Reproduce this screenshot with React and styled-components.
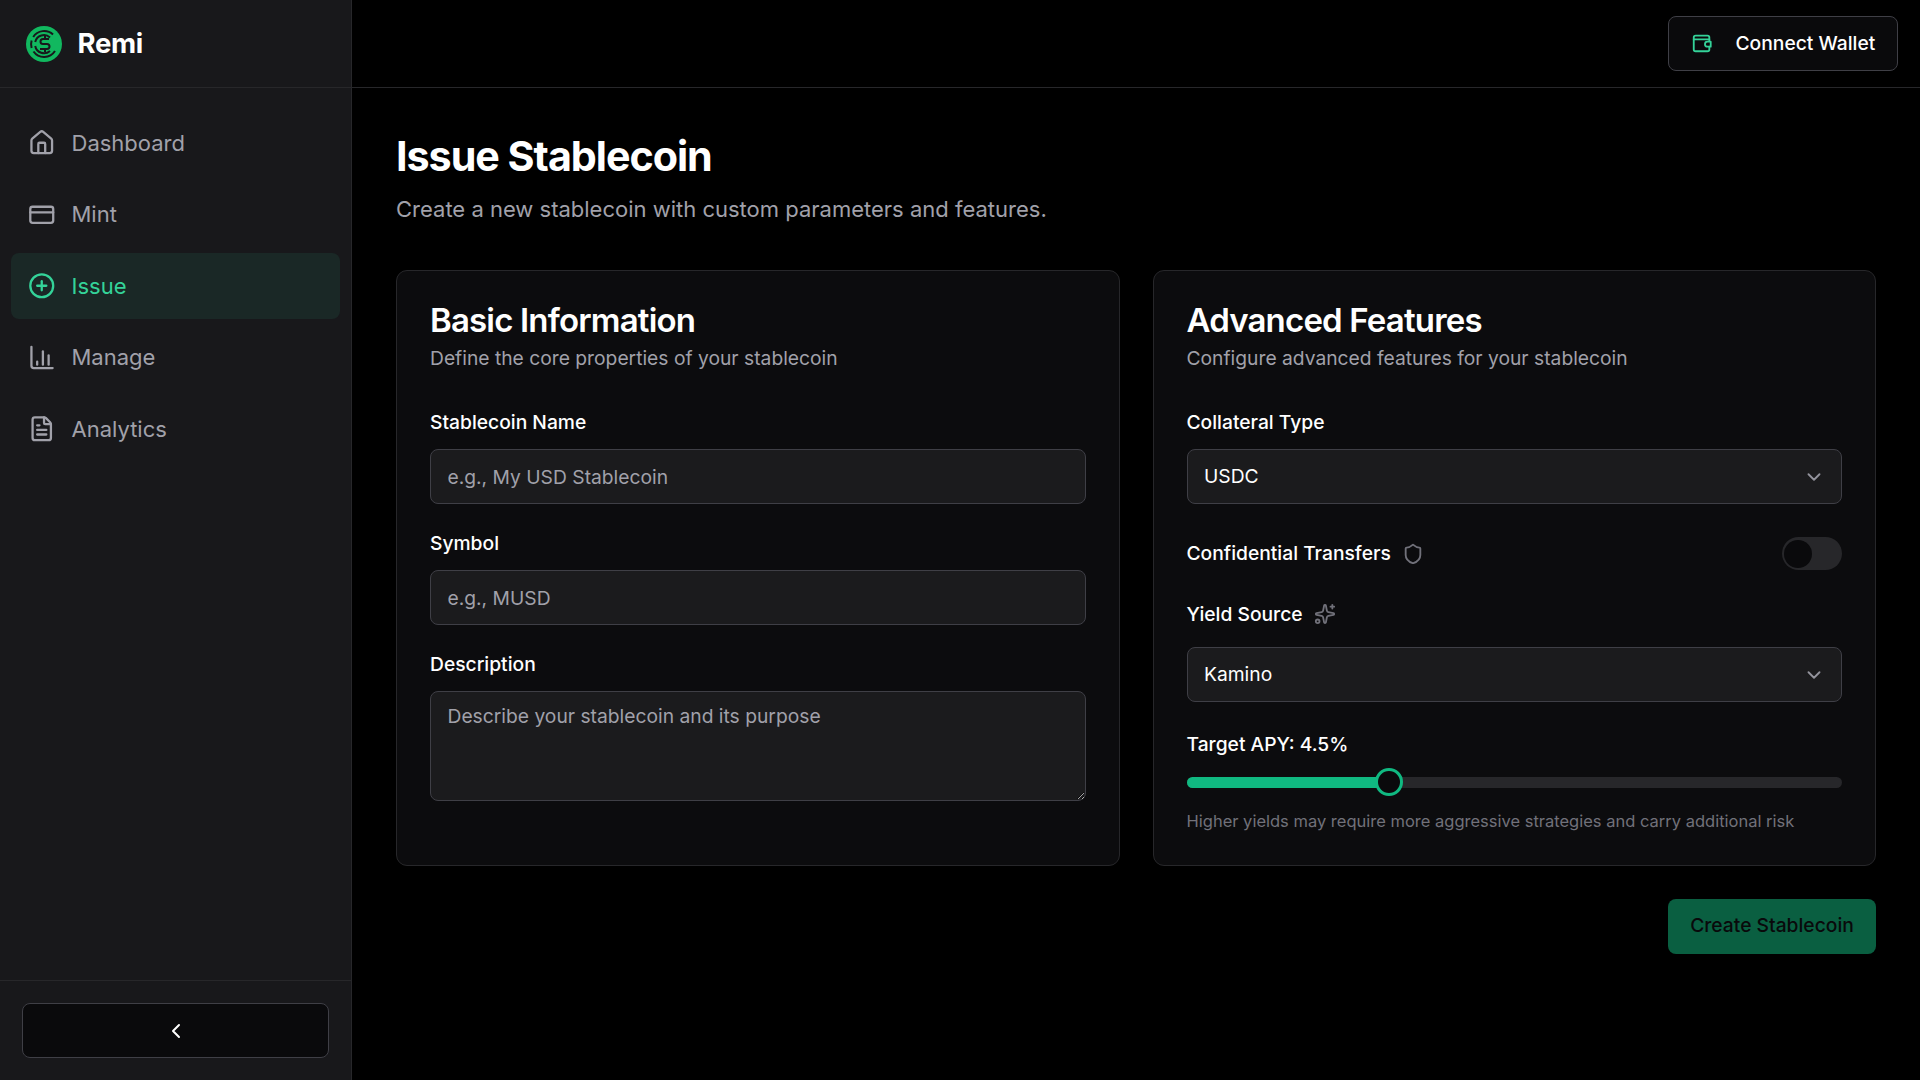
import React from 'react'
import styled, { createGlobalStyle } from 'styled-components'
import { House, CreditCard, CirclePlus, FileText, Shield, Sparkles, ChevronDown, ChevronLeft } from 'lucide-react'

const GlobalStyle = createGlobalStyle`
  * {
    box-sizing: border-box;
  }
  html, body {
    margin: 0;
    padding: 0;
    background: #000;
    color: #fff;
    font-family: Inter, "Liberation Sans", sans-serif;
  }
`

const Page = styled.div`
  display: flex;
  width: 100%;
  height: 100vh;
  overflow: hidden;
`

const Sidebar = styled.aside`
  display: flex;
  flex-direction: column;
  flex: 0 0 352px;
  height: 100%;
  background: #18181b;
  border-right: 1px solid #27272a;
`

const Brand = styled.div`
  display: flex;
  align-items: center;
  gap: 16px;
  height: 88px;
  padding: 0 26px;
  border-bottom: 1px solid #27272a;
`

const BrandName = styled.span`
  font-size: 27.5px;
  line-height: 33px;
  font-weight: 700;
  letter-spacing: -0.012em;
  margin: -1px 0 0 -0.5px;
`

const Nav = styled.nav`
  display: flex;
  flex-direction: column;
  flex: 1;
  gap: 5.5px;
  padding: 22px 11px 0;
`

const NavItem = styled.a`
  display: flex;
  align-items: center;
  gap: 16.5px;
  padding: 16.5px;
  border-radius: 8px;
  font-size: 22px;
  line-height: 33px;
  color: ${({ $active }) => ($active ? '#34d399' : '#a1a1aa')};
  background: ${({ $active }) => ($active ? '#1a2826' : 'transparent')};
  svg {
    flex: none;
    color: ${({ $active }) => ($active ? '#34d399' : '#a1a1aa')};
  }
`

const SidebarFooter = styled.div`
  height: 100px;
  padding: 22px 22px 0;
  border-top: 1px solid #27272a;
`

const CollapseButton = styled.button`
  display: flex;
  align-items: center;
  justify-content: center;
  width: 100%;
  height: 55px;
  padding: 0;
  color: #fff;
  background: #0a0a0c;
  border: 1px solid #3f3f46;
  border-radius: 8px;
`

const Main = styled.main`
  display: flex;
  flex-direction: column;
  flex: 1;
  min-width: 0;
`

const TopBar = styled.header`
  display: flex;
  align-items: center;
  justify-content: flex-end;
  height: 88px;
  padding: 0 22px 1px 0;
  border-bottom: 1px solid #27272a;
`

const WalletButton = styled.button`
  display: flex;
  align-items: center;
  gap: 22.5px;
  width: 230px;
  height: 55px;
  padding: 0 22px;
  font: 500 19.25px Inter, "Liberation Sans", sans-serif;
  color: #fff;
  background: #0a0a0c;
  border: 1px solid #3f3f46;
  border-radius: 8px;
  white-space: nowrap;
  svg {
    flex: none;
  }
`

const Content = styled.div`
  padding: 44px 44px 0;
`

const PageTitle = styled.h1`
  margin: 0;
  font-size: 41.25px;
  line-height: 48px;
  font-weight: 700;
  letter-spacing: -0.025em;
`

const PageSubtitle = styled.p`
  margin: 13px 0 0;
  font-size: 22px;
  line-height: 32px;
  color: #a1a1aa;
`

const Columns = styled.div`
  display: grid;
  grid-template-columns: 1fr 1fr;
  gap: 33px;
  margin-top: 45px;
`

const Card = styled.section`
  padding: 29px 33px 32px;
  background: #0c0c0e;
  border: 1px solid #27272a;
  border-radius: 11px;
`

const CardTitle = styled.h2`
  margin: 0;
  font-size: 33px;
  line-height: 40px;
  font-weight: 600;
  letter-spacing: -0.025em;
`

const CardSubtitle = styled.p`
  margin: 4px 0 36px;
  font-size: 19.25px;
  line-height: 28px;
  color: #a1a1aa;
`

const Label = styled.label`
  display: block;
  font-size: 19.25px;
  line-height: 28px;
  font-weight: 500;
  color: #fff;
`

const Field = styled.div`
  margin-bottom: 25px;
  ${Label} {
    margin-bottom: 13px;
  }
`

const fieldStyle = `
  display: block;
  width: 100%;
  padding: 0 16.5px;
  font: 400 19.25px Inter, "Liberation Sans", sans-serif;
  color: #fff;
  background: #1b1b1d;
  border: 1px solid #3f3f46;
  border-radius: 8px;
  outline: none;
  &::placeholder {
    color: #a1a1aa;
    opacity: 1;
  }
`

const TextInput = styled.input`
  ${fieldStyle}
  height: 55px;
`

const TextArea = styled.textarea`
  ${fieldStyle}
  height: 110px;
  padding-top: 10px;
  padding-bottom: 11px;
  line-height: 28px;
  resize: vertical;
`

const SelectBox = styled.div`
  display: flex;
  align-items: center;
  justify-content: space-between;
  height: 55px;
  padding: 0 16.5px 1px;
  font-size: 19.25px;
  background: #1b1b1d;
  border: 1px solid #3f3f46;
  border-radius: 8px;
  svg {
    color: #a1a1aa;
    opacity: 0.9;
    margin-bottom: -1px;
  }
`

const CollateralSelect = styled(SelectBox)`
  margin-top: 13px;
`

const ToggleRow = styled.div`
  display: flex;
  align-items: center;
  justify-content: space-between;
  height: 33px;
  margin-top: 33px;
`

const LabelGroup = styled.div`
  display: flex;
  align-items: center;
  gap: 11px;
  svg {
    color: #71717a;
  }
`

const ToggleLabel = styled(Label)`
  margin-top: -1px;
`

const Toggle = styled.div`
  display: flex;
  align-items: center;
  width: 60px;
  height: 33px;
  padding: 0 2px;
  background: #27272a;
  border-radius: 17px;
`

const ToggleKnob = styled.span`
  display: block;
  width: 28px;
  height: 28px;
  background: #0a0a0c;
  border-radius: 50%;
`

const YieldLabel = styled(LabelGroup)`
  margin: 30px 0 19px;
`

const ApyLabel = styled(Label)`
  margin: 28px 0 10px;
`

const Slider = styled.div`
  display: flex;
  align-items: center;
  height: 28px;
  position: relative;
`

const SliderTrack = styled.div`
  flex: 1;
  height: 11px;
  background: #27272a;
  border-radius: 6px;
  overflow: hidden;
`

const SliderFill = styled.div`
  height: 100%;
  background: #10b981;
`

const SliderThumb = styled.span`
  position: absolute;
  top: 0;
  width: 28px;
  height: 28px;
  margin-left: -14px;
  background: #0a0a0c;
  border: 3px solid #10b981;
  border-radius: 50%;
`

const Hint = styled.p`
  margin: 13px 0 0;
  font-size: 16.5px;
  line-height: 24px;
  color: #71717a;
`

const Actions = styled.div`
  display: flex;
  justify-content: flex-end;
  margin-top: 33px;
`

const CreateButton = styled.button`
  width: 208px;
  height: 55px;
  padding: 0 0 3px;
  font: 500 19.25px Inter, "Liberation Sans", sans-serif;
  color: #09090b;
  background: #0a5f41;
  border: 0;
  border-radius: 8px;
`

const Logo = () => (
  <svg width="36" height="36" viewBox="0 0 36 36" fill="none">
    <circle cx="18" cy="18" r="18" fill="#11b85f" />
    <g stroke="#18181b" strokeWidth="2" strokeLinecap="butt">
      <path d="M27 8.5A13 13 0 0 0 7.2 11" />
      <path d="M5.6 14.5A13 13 0 0 0 5.6 22" />
      <path d="M7.5 25.5A13 13 0 0 0 29 25" />
      <path d="M24 11.5A9 9 0 0 0 9.2 16" />
      <path d="M9.2 20A9 9 0 0 0 24 25" />
      <path d="M23 13H17a2.5 2.5 0 0 0 0 5h4a2.5 2.5 0 0 1 0 5h-7" />
      <path d="M19 10v3M19 23v3" />
    </g>
  </svg>
)

// custom because lucide's wallet has a different clasp
const WalletIcon = () => (
  <svg width="22" height="22" viewBox="0 0 24 24" fill="none" stroke="#34d399" strokeWidth="2" strokeLinecap="round" strokeLinejoin="round">
    <path d="M20 10V6a2 2 0 0 0-2-2H5a2 2 0 0 0-2 2v13a2 2 0 0 0 2 2h13a2 2 0 0 0 2-2v-3" />
    <path d="M3 8h17" />
    <path d="M18 10.5h3.5v5.5H18a2.7 2.7 0 0 1 0-5.5Z" />
  </svg>
)

const ManageIcon = () => (
  <svg width="27.5" height="27.5" viewBox="0 0 24 24" fill="none" stroke="currentColor" strokeWidth="2" strokeLinecap="round" strokeLinejoin="round">
    <path d="M3 2.5V19a2 2 0 0 0 2 2h16.5" />
    <path d="M8 18v-2.5" />
    <path d="M13 18V6.5" />
    <path d="M18 18V10" />
  </svg>
)

const navItems = [
  { label: 'Dashboard', icon: <House size={27.5} strokeWidth={2} /> },
  { label: 'Mint', icon: <CreditCard size={27.5} strokeWidth={2} /> },
  { label: 'Issue', icon: <CirclePlus size={27.5} strokeWidth={2} />, active: true },
  { label: 'Manage', icon: <ManageIcon /> },
  { label: 'Analytics', icon: <FileText size={27.5} strokeWidth={2} /> },
]

export default function App() {
  return (
    <Page>
      <GlobalStyle />
      <Sidebar>
        <Brand>
          <Logo />
          <BrandName>Remi</BrandName>
        </Brand>
        <Nav>
          {navItems.map((item) => (
            <NavItem key={item.label} $active={item.active}>
              {item.icon}
              {item.label}
            </NavItem>
          ))}
        </Nav>
        <SidebarFooter>
          <CollapseButton>
            <ChevronLeft size={24} strokeWidth={2} />
          </CollapseButton>
        </SidebarFooter>
      </Sidebar>
      <Main>
        <TopBar>
          <WalletButton>
            <WalletIcon />
            Connect Wallet
          </WalletButton>
        </TopBar>
        <Content>
          <PageTitle>Issue Stablecoin</PageTitle>
          <PageSubtitle>Create a new stablecoin with custom parameters and features.</PageSubtitle>
          <Columns>
            <Card>
              <CardTitle>Basic Information</CardTitle>
              <CardSubtitle>Define the core properties of your stablecoin</CardSubtitle>
              <Field>
                <Label>Stablecoin Name</Label>
                <TextInput placeholder="e.g., My USD Stablecoin" />
              </Field>
              <Field>
                <Label>Symbol</Label>
                <TextInput placeholder="e.g., MUSD" />
              </Field>
              <Field>
                <Label>Description</Label>
                <TextArea placeholder="Describe your stablecoin and its purpose" />
              </Field>
            </Card>
            <Card>
              <CardTitle>Advanced Features</CardTitle>
              <CardSubtitle>Configure advanced features for your stablecoin</CardSubtitle>
              <Label>Collateral Type</Label>
              <CollateralSelect>
                USDC
                <ChevronDown size={22} strokeWidth={2} />
              </CollateralSelect>
              <ToggleRow>
                <LabelGroup>
                  <ToggleLabel>Confidential Transfers</ToggleLabel>
                  <Shield size={22} strokeWidth={2} />
                </LabelGroup>
                <Toggle>
                  <ToggleKnob />
                </Toggle>
              </ToggleRow>
              <YieldLabel>
                <Label>Yield Source</Label>
                <Sparkles size={22} strokeWidth={2} />
              </YieldLabel>
              <SelectBox>
                Kamino
                <ChevronDown size={22} strokeWidth={2} />
              </SelectBox>
              <ApyLabel>Target APY: 4.5%</ApyLabel>
              <Slider>
                <SliderTrack>
                  <SliderFill style={{ width: '30.9%' }} />
                </SliderTrack>
                <SliderThumb style={{ left: '30.9%' }} />
              </Slider>
              <Hint>Higher yields may require more aggressive strategies and carry additional risk</Hint>
            </Card>
          </Columns>
          <Actions>
            <CreateButton>Create Stablecoin</CreateButton>
          </Actions>
        </Content>
      </Main>
    </Page>
  )
}
